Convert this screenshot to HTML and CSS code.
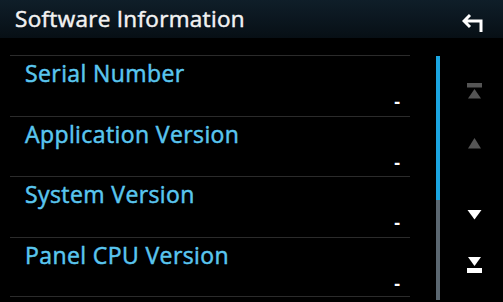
FILE: index.html
```html
<!DOCTYPE html>
<html lang="en">
<head>
    <meta charset="UTF-8">
    <title>Software Information</title>
    <link rel="stylesheet" href="styles.css">
</head>
<body>
    <div class="screen">
        <!-- Header -->
        <div class="header">
            <h1>Software Information</h1>
            <svg class="back" width="22" height="22" viewBox="0 0 22 22">
                <path d="M8 4 L2 10 L8 16 M2 10 H19 V21" fill="none" stroke="#fff" stroke-width="3" stroke-linejoin="miter"/>
            </svg>
        </div>

        <!-- Main -->
        <div class="main">
            <div class="info-list">
                <div class="row">
                    <span class="label">Serial Number</span>
                    <span class="value">-</span>
                </div>
                <div class="row">
                    <span class="label">Application Version</span>
                    <span class="value">-</span>
                </div>
                <div class="row">
                    <span class="label">System Version</span>
                    <span class="value">-</span>
                </div>
                <div class="row">
                    <span class="label">Panel CPU Version</span>
                    <span class="value">-</span>
                </div>
            </div>

            <div class="scrollbar">
                <div class="thumb"></div>
            </div>

            <div class="arrows">
                <svg class="arrow top" width="16" height="16" viewBox="0 0 16 16">
                    <rect x="0" y="0" width="15" height="4.5" fill="#555"/>
                    <polygon points="7.5,6 14,15.5 1,15.5" fill="#555"/>
                </svg>
                <svg class="arrow up" width="16" height="11" viewBox="0 0 16 11">
                    <polygon points="7.5,0 14,10.5 1,10.5" fill="#555"/>
                </svg>
                <svg class="arrow down" width="16" height="10" viewBox="0 0 16 10">
                    <polygon points="0.5,0 14.5,0 7.5,9.5" fill="#fff"/>
                </svg>
                <svg class="arrow bottom" width="16" height="16" viewBox="0 0 16 16">
                    <polygon points="1,0 14,0 7.5,9" fill="#fff"/>
                    <rect x="0" y="11" width="15" height="5" fill="#fff"/>
                </svg>
            </div>
        </div>
    </div>
</body>
</html>
```

FILE: styles.css
```css
/* Reset */
* {
    margin: 0;
    padding: 0;
    box-sizing: border-box;
}

body {
    font-family: 'Open Sans', 'Noto Sans', sans-serif;
    background-color: #000;
    color: #fff;
    width: 503px;
    height: 302px;
    overflow: hidden;
}

.screen {
    display: flex;
    flex-direction: column;
    height: 302px;
}

/* Header */
.header {
    height: 38px;
    display: flex;
    align-items: center;
    justify-content: space-between;
    padding: 0 19px 0 15px;
    background: linear-gradient(#0f1e29, #070f15);
}

    .header h1 {
        font-size: 22.5px;
        font-weight: 400;
        color: #f2f2f2;
        letter-spacing: 0.3px;
        -webkit-text-stroke: 0.5px #f2f2f2;
        margin-top: -1px;
    }

    .header .back {
        margin-top: 5px;
    }

/* Main */
.main {
    flex: 1;
    display: flex;
}

.info-list {
    width: 400px;
    margin-left: 10px;
    padding-top: 17px;
}

    .info-list .row {
        height: 60.5px;
        border-top: 1px solid #2b2b2b;
        display: flex;
        flex-direction: column;
        padding: 3px 10px 0 15px;
    }

    .info-list .row:last-child {
        border-bottom: 1px solid #2b2b2b;
    }

    .info-list .label {
        font-size: 23px;
        font-weight: 400;
        line-height: 28px;
        letter-spacing: 0.4px;
        color: #5ac6ef;
        -webkit-text-stroke: 0.5px #5ac6ef;
    }

    .info-list .value {
        align-self: flex-end;
        font-size: 18px;
        line-height: 20px;
        margin-top: 4px;
        color: #fff;
        font-weight: 700;
    }

/* Scrollbar */
.scrollbar {
    width: 4px;
    margin: 18px 0 2px 26px;
    background-color: #5b6770;
}

    .scrollbar .thumb {
        height: 144px;
        background-color: #1ba6e2;
    }

/* Scroll buttons */
.arrows {
    width: 63px;
    display: flex;
    flex-direction: column;
    align-items: center;
    padding: 45px 0 0 6px;
}

    .arrows .up {
        margin-top: 39px;
    }

    .arrows .down {
        margin-top: 61px;
    }

    .arrows .bottom {
        margin-top: 37px;
    }
```
